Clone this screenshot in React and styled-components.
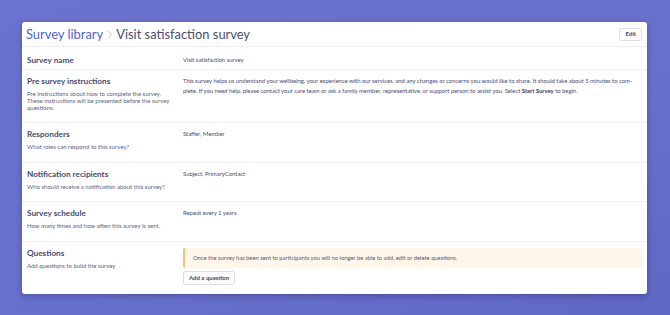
import React from 'react';
import styled, { createGlobalStyle } from 'styled-components';

const GlobalStyle = createGlobalStyle`
  html, body {
    margin: 0;
    padding: 0;
  }
  body {
    width: 670px;
    height: 315px;
    overflow: hidden;
    background: linear-gradient(160deg, #6b73cf 0%, #6870cb 60%, #6067c4 100%);
    font-family: Lato, "Liberation Sans", sans-serif;
    color: #3d4070;
  }
`;

const Page = styled.div`
  padding: 22px 23px 23px 22px;
`;

const Card = styled.div`
  background: #ffffff;
  border-radius: 3px;
  box-shadow: 0 2px 6px rgba(30, 30, 90, 0.35);
  overflow: hidden;
`;

const Header = styled.div`
  display: flex;
  align-items: center;
  justify-content: space-between;
  height: 24px;
  padding: 0 5px 0 4px;
  border-bottom: 1px solid #eceef3;
`;

const Crumbs = styled.div`
  display: flex;
  align-items: center;
  font-size: 12.9px;
  color: #4a4e70;
`;

const CrumbLink = styled.a`
  color: #4d62e3;
  text-decoration: none;
`;

const Chevron = styled.svg`
  width: 6px;
  height: 9px;
  margin: 1px 3px 0 4px;
`;

const SmallButton = styled.button`
  font-family: inherit;
  font-size: 6px;
  font-weight: 700;
  color: #3d4070;
  background: #fff;
  border: 1px solid #dcdfe8;
  border-radius: 2px;
  padding: 0 5px;
  height: ${p => (p.$wide ? '14px' : '13px')};
  line-height: 1;
  cursor: pointer;
`;

const Row = styled.div`
  display: grid;
  grid-template-columns: 156px 1fr;
  min-height: ${p => p.$h}px;
  padding: ${p => p.$pt || 6}px 5px 0 5px;
  box-sizing: border-box;
  border-bottom: ${p => (p.$last ? 'none' : '1px solid #eceef3')};
`;

const Label = styled.div`
  display: flex;
  flex-direction: column;
  gap: 4px;
`;

const Title = styled.div`
  font-size: 8.2px;
  font-weight: 700;
  color: #464a72;
`;

const Desc = styled.div`
  font-size: 6px;
  line-height: 7px;
  color: #5a5f84;
  padding-right: 8px;
`;

const Value = styled.div`
  font-size: 6px;
  line-height: 10px;
  letter-spacing: -0.06px;
  color: #4a4e78;
  strong {
    font-weight: 700;
    color: #383b66;
  }
`;

const Stack = styled.div`
  display: flex;
  flex-direction: column;
  align-items: flex-start;
  gap: 3px;
`;

const Notice = styled.div`
  align-self: stretch;
  background: #fff6ea;
  border-left: 2px solid #f7c06d;
  border-radius: 2px;
  font-size: 5.8px;
  line-height: 8px;
  color: #545880;
  padding: 6px 9px 6px 8px;
`;

const rows = [
  { title: 'Survey name', value: 'Visit satisfaction survey', h: 23, pt: 8 },
  {
    title: 'Pre survey instructions',
    desc: 'Pre instructions about how to complete the survey. These instructions will be presented before the survey questions.',
    value: (
      <>
        This survey helps us understand your wellbeing, your experience with our services, and any changes or concerns you would like to share. It should take about 5 minutes to com{'\u00AD'}plete. If you need help, please contact your care team or ask a family member, representative, or support person to assist you. Select <strong>Start Survey</strong> to begin.
      </>
    ),
    h: 53,
  },
  { title: 'Responders', desc: 'What roles can respond to this survey?', value: 'Staffer, Member', h: 40 },
  { title: 'Notification recipients', desc: 'Who should receive a notification about this survey?', value: 'Subject, PrimaryContact', h: 39 },
  { title: 'Survey schedule', desc: 'How many times and how often this survey is sent.', value: 'Repeat every 1 years', h: 40 },
];

export default function App() {
  return (
    <>
      <GlobalStyle />
      <Page>
        <Card>
          <Header>
            <Crumbs>
              <CrumbLink href="#">Survey library</CrumbLink>
              <Chevron viewBox="0 0 6 9">
                <path d="M1 0.8 L4.6 4.5 L1 8.2" fill="none" stroke="#c3c6d3" strokeWidth="1" />
              </Chevron>
              <span>Visit satisfaction survey</span>
            </Crumbs>
            <SmallButton>Edit</SmallButton>
          </Header>
          {rows.map(r => (
            <Row key={r.title} $h={r.h} $pt={r.pt}>
              <Label>
                <Title>{r.title}</Title>
                {r.desc && <Desc>{r.desc}</Desc>}
              </Label>
              <Value>{r.value}</Value>
            </Row>
          ))}
          <Row $h={52} $last>
            <Label>
              <Title>Questions</Title>
              <Desc>Add questions to build the survey</Desc>
            </Label>
            <Stack>
              <Notice>Once the survey has been sent to participants you will no longer be able to add, edit or delete questions.</Notice>
              <SmallButton $wide>Add a question</SmallButton>
            </Stack>
          </Row>
        </Card>
      </Page>
    </>
  );
}
